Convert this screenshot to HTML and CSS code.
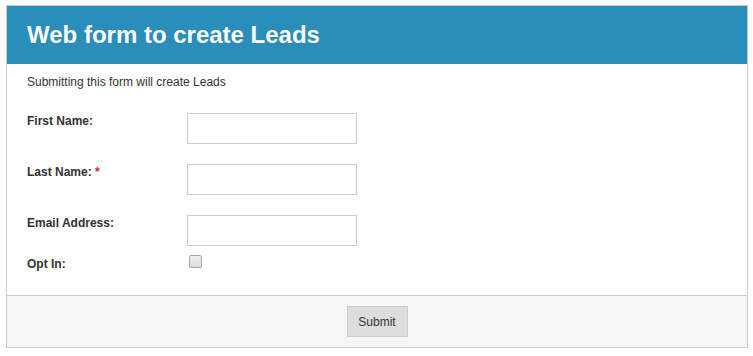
FILE: index.html
```html
<!DOCTYPE html>
<html>
<head>
<meta charset="utf-8">
<link rel="stylesheet" href="styles.css">
</head>
<body>
<div class="box">
  <div class="header"><h1 class="title">Web form to create Leads</h1></div>
  <div class="content">
    <p class="intro">Submitting this form will create Leads</p>
    <div class="row">
      <label class="label">First Name:</label>
      <input class="field" type="text">
    </div>
    <div class="row">
      <label class="label">Last Name: <span class="req">*</span></label>
      <input class="field" type="text">
    </div>
    <div class="row row-tight">
      <label class="label">Email Address:</label>
      <input class="field" type="text">
    </div>
    <div class="row row-last">
      <label class="label label-check">Opt In:</label>
      <input class="check" type="checkbox">
    </div>
  </div>
  <div class="footer">
    <button class="submit" type="button">Submit</button>
  </div>
</div>
</body>
</html>
```
FILE: styles.css
```css
html, body {
  margin: 0;
  padding: 0;
  background: #ffffff;
}
body {
  padding: 5px 5px 0 6px;
  font-family: "Liberation Sans", Arial, sans-serif;
  color: #333333;
}
.box {
  border: 1px solid #cccccc;
  background: #ffffff;
}
.header {
  height: 58px;
  background: #2a8dba;
  padding: 0 20px;
  display: flex;
  align-items: center;
}
.title {
  margin: 0;
  font-size: 24px;
  font-weight: bold;
  color: #fcfcfc;
  line-height: 28px;
}
.content {
  padding: 10px 20px 23px 20px;
}
.intro {
  margin: 0 0 23px 0;
  font-size: 12px;
  line-height: 16px;
}
.row {
  display: flex;
  align-items: flex-start;
  margin-bottom: 20px;
}
.row-tight {
  margin-bottom: 9px;
}
.row-last {
  margin-bottom: 0;
}
.label {
  width: 160px;
  flex: none;
  font-size: 12px;
  font-weight: bold;
  line-height: 16px;
  padding-top: 0;
}
.label-check {
  padding-top: 1px;
}
.req {
  color: #e02020;
}
.field {
  box-sizing: border-box;
  width: 170px;
  height: 31px;
  margin: 0;
  border: 1px solid #cccccc;
  background: #ffffff;
  padding: 4px 6px;
}
.check {
  -webkit-appearance: none;
  appearance: none;
  box-sizing: border-box;
  margin: 0 0 0 2px;
  width: 13px;
  height: 13px;
  border: 1px solid #a6a6a6;
  border-radius: 2px;
  background: linear-gradient(#efefef, #dcdcdc);
}
.footer {
  border-top: 1px solid #cccccc;
  background: #f6f6f6;
  padding: 10px 0;
  display: flex;
  justify-content: center;
}
.submit {
  box-sizing: border-box;
  width: 61px;
  height: 31px;
  margin: 0;
  border: 1px solid #cccccc;
  background: #dddddd;
  color: #333333;
  font-family: "Liberation Sans", Arial, sans-serif;
  font-size: 12px;
  padding: 0;
}
```
